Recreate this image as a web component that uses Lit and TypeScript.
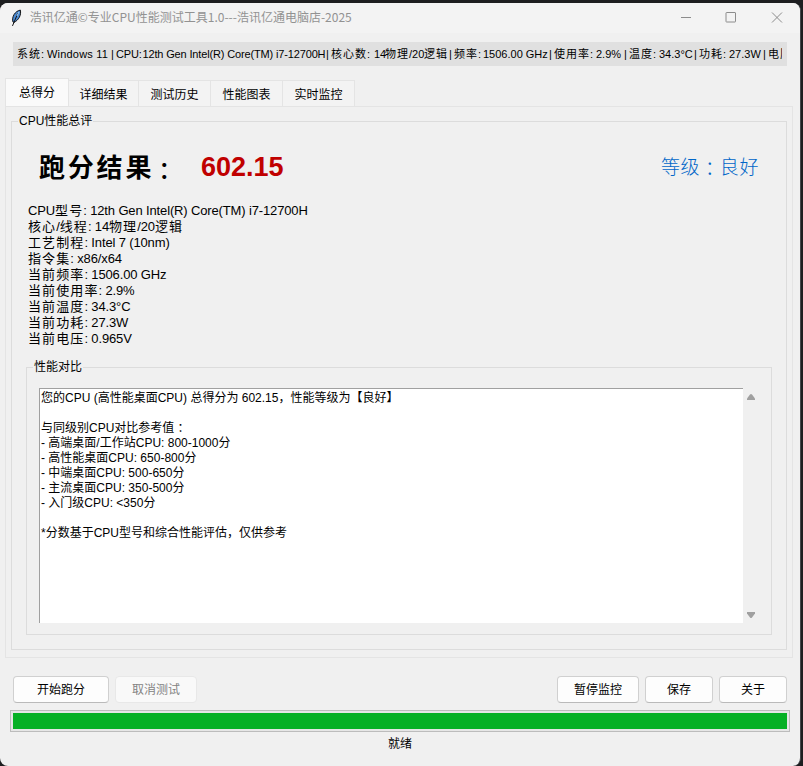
import { LitElement, html, css } from "lit";
import { customElement, property } from "lit/decorators.js";

const CJK = /([\u2e80-\u9fff\uff00-\uff19\uff1b-\uffef\u3000-\u303f]+|：)/;

/** Splits a line into Chinese and Latin runs so each can carry its own spacing. */
const runs = (text: string) =>
  text.split(CJK).filter((s) => s).map((s) =>
    s === "：" ? html`<span class="colon">：</span>` : CJK.test(s) ? html`<span class="c">${s}</span>` : s);

const INFO = [
  "CPU型号: 12th Gen Intel(R) Core(TM) i7-12700H",
  "核心/线程: 14物理/20逻辑",
  "工艺制程: Intel 7 (10nm)",
  "指令集: x86/x64",
  "当前频率: 1506.00 GHz",
  "当前使用率: 2.9%",
  "当前温度: 34.3°C",
  "当前功耗: 27.3W",
  "当前电压: 0.965V",
];

const REPORT = [
  "您的CPU (高性能桌面CPU) 总得分为 602.15，性能等级为【良好】",
  "",
  "与同级别CPU对比参考值：",
  "- 高端桌面/工作站CPU: 800-1000分",
  "- 高性能桌面CPU: 650-800分",
  "- 中端桌面CPU: 500-650分",
  "- 主流桌面CPU: 350-500分",
  "- 入门级CPU: <350分",
  "",
  "*分数基于CPU型号和综合性能评估，仅供参考",
];

const STATUS = [
  "系统:", "Windows 11", "|", "CPU:", "12th Gen Intel(R) Core(TM) i7-12700H", "|",
  "核心数:", "14", "物理", "/20", "逻辑", "|", "频率:", "1506.00 GHz", "|",
  "使用率:", "2.9%", "|", "温度:", "34.3°C", "|", "功耗:", "27.3W", "|", "电压",
];

@customElement("group-box")
class GroupBox extends LitElement {
  @property() label = "";
  static styles = css`
    :host { display: block; }
    .frame { box-sizing: border-box; height: 100%; border: 1px solid #dcdcdc; display: flex; flex-direction: column; }
    .label { align-self: flex-start; height: 16px; line-height: 16px; margin: -9px 0 0 6px; padding: 0 1px; background: #f0f0f0; font-size: 12px; white-space: nowrap; }
  `;
  render() {
    return html`<div class="frame"><div class="label">${this.label}</div><slot></slot></div>`;
  }
}

@customElement("app-root")
class AppRoot extends LitElement {
  static styles = css`
    :host { display: block; width: 803px; height: 766px; background: #1d1e20; overflow: hidden;
      font-family: "Liberation Sans", "Noto Sans CJK SC", sans-serif; font-size: 12px; color: #000; }
    .desk { padding-top: 3px; height: 763px; }
    .window { box-sizing: border-box; width: 801px; height: 763px; border-right: 1px solid #44474a; background: #f0f0f0;
      border-radius: 8px; overflow: hidden; display: flex; flex-direction: column; }
    .title { flex: none; height: 30px; background: #f3f3f3; display: flex; align-items: center; color: #929292; }
    .feather { margin: 0 0 1px 10px; width: 12px; height: 18px; }
    .name { margin-left: 8px; padding-bottom: 3px; width: 640px; font-family: "Noto Sans CJK SC", sans-serif; font-size: 12px; white-space: nowrap; }
    .controls { display: flex; margin-left: auto; margin-right: 1px; }
    .controls svg { width: 45.5px; height: 30px; fill: none; stroke: #8c8c8c; }
    .status { flex: none; margin: 9px 0 0 13px; width: 769px; padding-right: 5px; height: 24px; background: #e0e0e0; }
    .cells { box-sizing: border-box; width: 769px; height: 24px; padding-left: 4px; line-height: 24px; font-size: 11px; overflow: hidden; white-space: nowrap; display: grid;
      grid-template-columns: 30px 64px 5px 26.5px 183.5px 5px 43px 11px 24px 15px 25px 5px 29px 66px 5px 42px 28px 5px 30px 35px 5px 30px 34px 5px 24px; }
    .cells .c { letter-spacing: 1px; }
    .cells > :nth-child(2) { letter-spacing: .2px; }
    .cells > :nth-child(4), .cells > :nth-child(5) { letter-spacing: -.15px; }
    .tabs { flex: none; display: flex; align-items: flex-end; height: 28px; margin: 12px 0 0 5px; }
    .tab { box-sizing: border-box; height: 26px; width: 72px; border: 1px solid #e4e4e4; border-left: 0; border-bottom: 0; background: #f3f3f3; text-align: center; line-height: 28px; }
    .tab.on { height: 28px; width: 64px; border-left: 1px solid #e4e4e4; background: #fafafa; line-height: 28px; }
    .tab.second { width: 70px; }
    .page { flex: none; box-sizing: border-box; margin-left: 5px; width: 788px; height: 552px; border: 1px solid #e4e4e4; padding: 14px 5px 6px; }
    .total { height: 529px; }
    .score { display: flex; align-items: center; height: 60px; box-sizing: content-box; padding: 8px 27px 4px; }
    .head { width: 146px; font-size: 26px; font-weight: bold; letter-spacing: 2.8px; padding-bottom: 4px; white-space: nowrap; }
    .value { font-size: 27px; font-weight: bold; color: #c00000; margin-left: 16px; }
    .grade { font-size: 19px; font-weight: 300; color: #0066c8; margin-left: auto; letter-spacing: .6px; padding-bottom: 3px; }
    .colon { font-family: "Noto Sans CJK TC", sans-serif; line-height: 0; vertical-align: -.08em; }
    .head .colon { font-size: 24px; font-weight: 500; margin-left: -2px; vertical-align: -3px; }
    .info { margin: 2px 0 0 16px; font-size: 13px; line-height: 16px; white-space: pre; letter-spacing: -.14px; }
    .row { height: 16px; }
    .info .c { letter-spacing: 1.1px; }
    .compare { width: 746px; height: 268px; margin: 20px 0 0 14px; }
    .pane { display: flex; margin: 13px 0 0 12px; }
    .text { box-sizing: border-box; width: 704px; height: 235px; background: #fff; border-top: 1px solid #a0a0a0; border-left: 1px solid #a0a0a0; padding: 2px 0 0 1px; }
    .line { height: 15px; line-height: 15px; white-space: pre; }
    .scroll { width: 16px; display: flex; flex-direction: column; justify-content: space-between; align-items: center; padding: 6px 0 5px; box-sizing: border-box; }
    .scroll svg { width: 8px; height: 6px; fill: #a0a0a0; }
    .actions { flex: none; display: flex; gap: 6px; margin: 18px 13px 0 13px; height: 28px; }
    .btn { box-sizing: border-box; height: 27px; border: 1px solid #d0d0d0; border-bottom-color: #bababa; border-radius: 4px; background: #fdfdfd; text-align: center; line-height: 26px; width: 68px; }
    .wide { width: 96px; }
    .mid { width: 82px; }
    .off { color: #838383; border-color: #e8e8e8; background: #f9f9f9; }
    .gap { flex: 1; }
    .progress { flex: none; box-sizing: border-box; margin: 6px 0 0 10px; width: 780px; height: 22px; border: 1px solid #bcbcbc; background: #e6e6e6; padding: 2px; }
    .bar { height: 16px; background: #06b025; }
    .ready { text-align: center; line-height: 24px; }
  `;

  render() {
    return html`<div class="desk"><div class="window">
      <div class="title">
        <svg class="feather" viewBox="0 0 12 18"><path d="M3 13C1.500 8 5 2 10.500 1C11.500 6 9 11 4 13.500Z" fill="#4a8ad4" stroke="#111" stroke-width="1"/><path d="M8 4L2.500 17" stroke="#111" fill="none"/><path d="M9 3L7 7" stroke="#a8d0f0" fill="none"/></svg>
        <span class="name">浩讯亿通©专业CPU性能测试工具1.0---浩讯亿通电脑店-2025</span>
        <div class="controls">
          <svg viewBox="0 0 45.500 30"><path d="M18 14.500H28"/></svg>
          <svg viewBox="0 0 45.500 30"><rect x="18" y="9.500" width="9.500" height="9.500" rx=".5"/></svg>
          <svg viewBox="0 0 45.500 30"><path d="M18 9.500L28 19.500M28 9.500L18 19.500"/></svg>
        </div>
      </div>
      <div class="status"><div class="cells">${STATUS.map((s) => html`<span>${runs(s)}</span>`)}</div></div>
      <div class="tabs">
        <div class="tab on">总得分</div><div class="tab second">详细结果</div><div class="tab">测试历史</div><div class="tab">性能图表</div><div class="tab">实时监控</div>
      </div>
      <div class="page">
        <group-box class="total" label="CPU性能总评">
          <div class="score"><span class="head">${runs("跑分结果：")}</span><span class="value">602.15</span><span class="grade">${runs("等级：良好")}</span></div>
          <div class="info">${INFO.map((t) => html`<div class="row">${runs(t)}</div>`)}</div>
          <group-box class="compare" label="性能对比">
            <div class="pane">
              <div class="text">${REPORT.map((t) => html`<div class="line">${runs(t)}</div>`)}</div>
              <div class="scroll">
                <svg viewBox="0 0 8 6"><path d="M0 6V4.500L3 .5Q4-.5 5 .5L8 4.500V6Z"/></svg>
                <svg viewBox="0 0 8 6"><path d="M0 0V1.500L3 5.500Q4 6.500 5 5.500L8 1.500V0Z"/></svg>
              </div>
            </div>
          </group-box>
        </group-box>
      </div>
      <div class="actions">
        <div class="btn wide">开始跑分</div><div class="btn mid off">取消测试</div><div class="gap"></div>
        <div class="btn mid">暂停监控</div><div class="btn">保存</div><div class="btn">关于</div>
      </div>
      <div class="progress"><div class="bar"></div></div>
      <div class="ready">就绪</div>
    </div></div>`;
  }
}
